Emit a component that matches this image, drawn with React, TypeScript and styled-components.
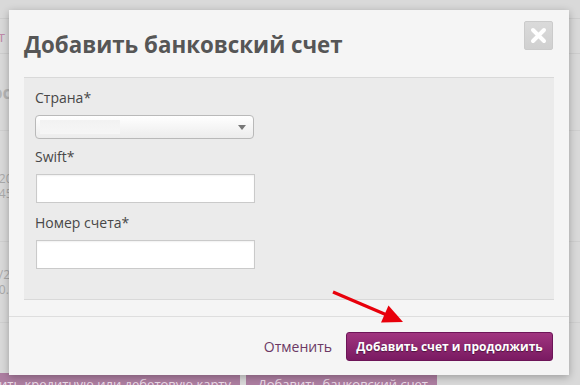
import styled, { createGlobalStyle } from 'styled-components';

const GlobalStyle = createGlobalStyle`
	html, body {
		margin: 0;
		padding: 0;
	}
	body {
		font-family: 'Open Sans', 'Liberation Sans', sans-serif;
		background: #d8d8d8;
	}
`;

const Screen = styled.div`
	position: relative;
	width: 580px;
	height: 385px;
	overflow: hidden;
	background: #d9d9d9;
`;

/* page behind the dialog, only its edges stay visible */
const BackPage = styled.div`
	display: flex;
	flex-direction: column;
	height: 100%;
	margin-left: -14px;
`;

const BackHeader = styled.div`
	height: 18px;
	border-bottom: 1px solid #cdcdcd;
`;

const BackTitle = styled.div`
	height: 34px;
	border-bottom: 1px solid #cdcdcd;
	display: flex;
	align-items: center;
	padding-left: 12px;
	font-size: 15px;
	color: #c08aa8;
`;

const BackRow = styled.div<{ $h: number }>`
	height: ${({ $h }) => $h}px;
	border-bottom: 1px solid #cfcfcf;
	display: flex;
	flex-direction: column;
	justify-content: center;
	padding-left: 6px;
	font-size: 12px;
	line-height: 15px;
	color: #a9a9a9;
`;

const BackCaption = styled.span<{ $size?: number }>`
	font-size: ${({ $size }) => $size ?? 12}px;
	font-weight: ${({ $size }) => ($size ? 700 : 400)};
	color: ${({ $size }) => ($size ? '#b5b5b5' : '#a9a9a9')};
`;

const BackActions = styled.div`
	margin-top: auto;
	display: flex;
	gap: 6px;
	height: 12px;
`;

const BackButton = styled.div<{ $w: number }>`
	flex: none;
	width: ${({ $w }) => $w}px;
	height: 22px;
	background: #ad7ea1;
	color: #ecdde8;
	font-size: 13px;
	line-height: 22px;
	white-space: nowrap;
	overflow: hidden;
	display: flex;
	justify-content: flex-end;
	padding-right: 9px;
	box-sizing: border-box;
`;

const Modal = styled.div`
	position: absolute;
	left: 9px;
	top: 10px;
	width: 560px;
	height: 365px;
	background: #f5f5f5;
	box-shadow: 0 2px 8px rgba(0, 0, 0, 0.28);
	display: flex;
	flex-direction: column;
`;

const Header = styled.div`
	height: 67px;
	box-sizing: border-box;
	padding: 11px 16px 0 15px;
	display: flex;
	justify-content: space-between;
	align-items: flex-start;
`;

const Title = styled.h2`
	margin: 10px 0 0;
	font-size: 22.3px;
	line-height: 28px;
	font-weight: 700;
	color: #565656;
`;

const CloseButton = styled.button`
	width: 29px;
	height: 29px;
	padding: 0;
	border: 1px solid #cbcbcb;
	border-radius: 2px;
	background: linear-gradient(#dadada, #d0d0d0);
	display: flex;
	align-items: center;
	justify-content: center;
	cursor: pointer;
`;

const Panel = styled.div`
	margin: 0 15px 0 15px;
	height: 223px;
	box-sizing: border-box;
	background: #ebebeb;
	border-top: 1px solid #d9d9d9;
	border-bottom: 1px solid #d9d9d9;
	padding: 9px 11px 0;
	display: flex;
	flex-direction: column;
`;

const Label = styled.label<{ $gap: number }>`
	font-size: 14px;
	line-height: 22px;
	color: #474747;
	margin-top: ${({ $gap }) => $gap}px;
	margin-bottom: 6px;
`;

const Select = styled.div`
	width: 219px;
	height: 24px;
	box-sizing: border-box;
	border: 1px solid #b9b9b9;
	border-radius: 4px;
	background: linear-gradient(#ffffff, #ececec);
	display: flex;
	align-items: center;
	justify-content: space-between;
	padding: 0 7px 0 4px;
`;

const SelectValue = styled.span`
	width: 80px;
	height: 14px;
	background: linear-gradient(#f2f2f2, #f6f6f6);
`;

const Caret = styled.span`
	width: 0;
	height: 0;
	border-left: 4px solid transparent;
	border-right: 4px solid transparent;
	border-top: 5px solid #777;
`;

const TextInput = styled.input`
	width: 219px;
	height: 29px;
	box-sizing: border-box;
	border: 1px solid #cacaca;
	background: #fff;
	box-shadow: inset 0 1px 2px rgba(0, 0, 0, 0.06);
	margin-left: 1px;
	padding: 0 6px;
	outline: none;
`;

const Footer = styled.div`
	margin-top: 16px;
	flex: 1;
	border-top: 1px solid #dedede;
	display: flex;
	justify-content: flex-end;
	align-items: center;
	gap: 14px;
	padding: 0 16px 0 0;
`;

const CancelLink = styled.a`
	font-size: 14px;
	color: #6c3964;
	text-decoration: none;
	cursor: pointer;
`;

const SubmitButton = styled.button`
	width: 207px;
	height: 29px;
	border: 1px solid #6d1558;
	border-radius: 3px;
	background: linear-gradient(#a0357f, #7a1a62);
	color: #fff;
	font-family: 'Open Sans', 'Liberation Sans', sans-serif;
	font-size: 12px;
	font-weight: 700;
	text-shadow: 0 1px 1px rgba(0, 0, 0, 0.45);
	cursor: pointer;
`;

const Pointer = styled.svg`
	position: absolute;
	left: 0;
	top: 0;
	pointer-events: none;
`;

export default function App() {
	return (
		<>
			<GlobalStyle />
			<Screen>
				<BackPage>
					<BackHeader />
					<BackTitle>т</BackTitle>
					<BackRow $h={76}>
						<BackCaption $size={17}>ос</BackCaption>
					</BackRow>
					<BackRow $h={110}>
						<BackCaption>120</BackCaption>
						<BackCaption>445</BackCaption>
					</BackRow>
					<BackRow $h={80}>
						<BackCaption>0/2</BackCaption>
						<BackCaption>00.</BackCaption>
					</BackRow>
					<BackActions>
						<BackButton $w={254}>Добавить кредитную или дебетовую карту</BackButton>
						<BackButton $w={191}>Добавить банковский счет</BackButton>
					</BackActions>
				</BackPage>

				<Modal>
					<Header>
						<Title>Добавить банковский счет</Title>
						<CloseButton aria-label="Закрыть">
							<svg width="17" height="17" viewBox="0 0 17 17">
								<path d="M3 3 L14 14 M14 3 L3 14" stroke="#fff" strokeWidth="4" strokeLinecap="round" />
							</svg>
						</CloseButton>
					</Header>
					<Panel>
						<Label $gap={0}>Страна*</Label>
						<Select>
							<SelectValue />
							<Caret />
						</Select>
						<Label $gap={7}>Swift*</Label>
						<TextInput />
						<Label $gap={9}>Номер счета*</Label>
						<TextInput />
					</Panel>
					<Footer>
						<CancelLink>Отменить</CancelLink>
						<SubmitButton>Добавить счет и продолжить</SubmitButton>
					</Footer>
				</Modal>

				<Pointer width="580" height="385" viewBox="0 0 580 385">
					<line x1="333" y1="292" x2="388" y2="315.5" stroke="#e8000b" strokeWidth="3.2" />
					<polygon points="403,322 381,322.4 388.5,305.5" fill="#e8000b" />
				</Pointer>
			</Screen>
		</>
	);
}
